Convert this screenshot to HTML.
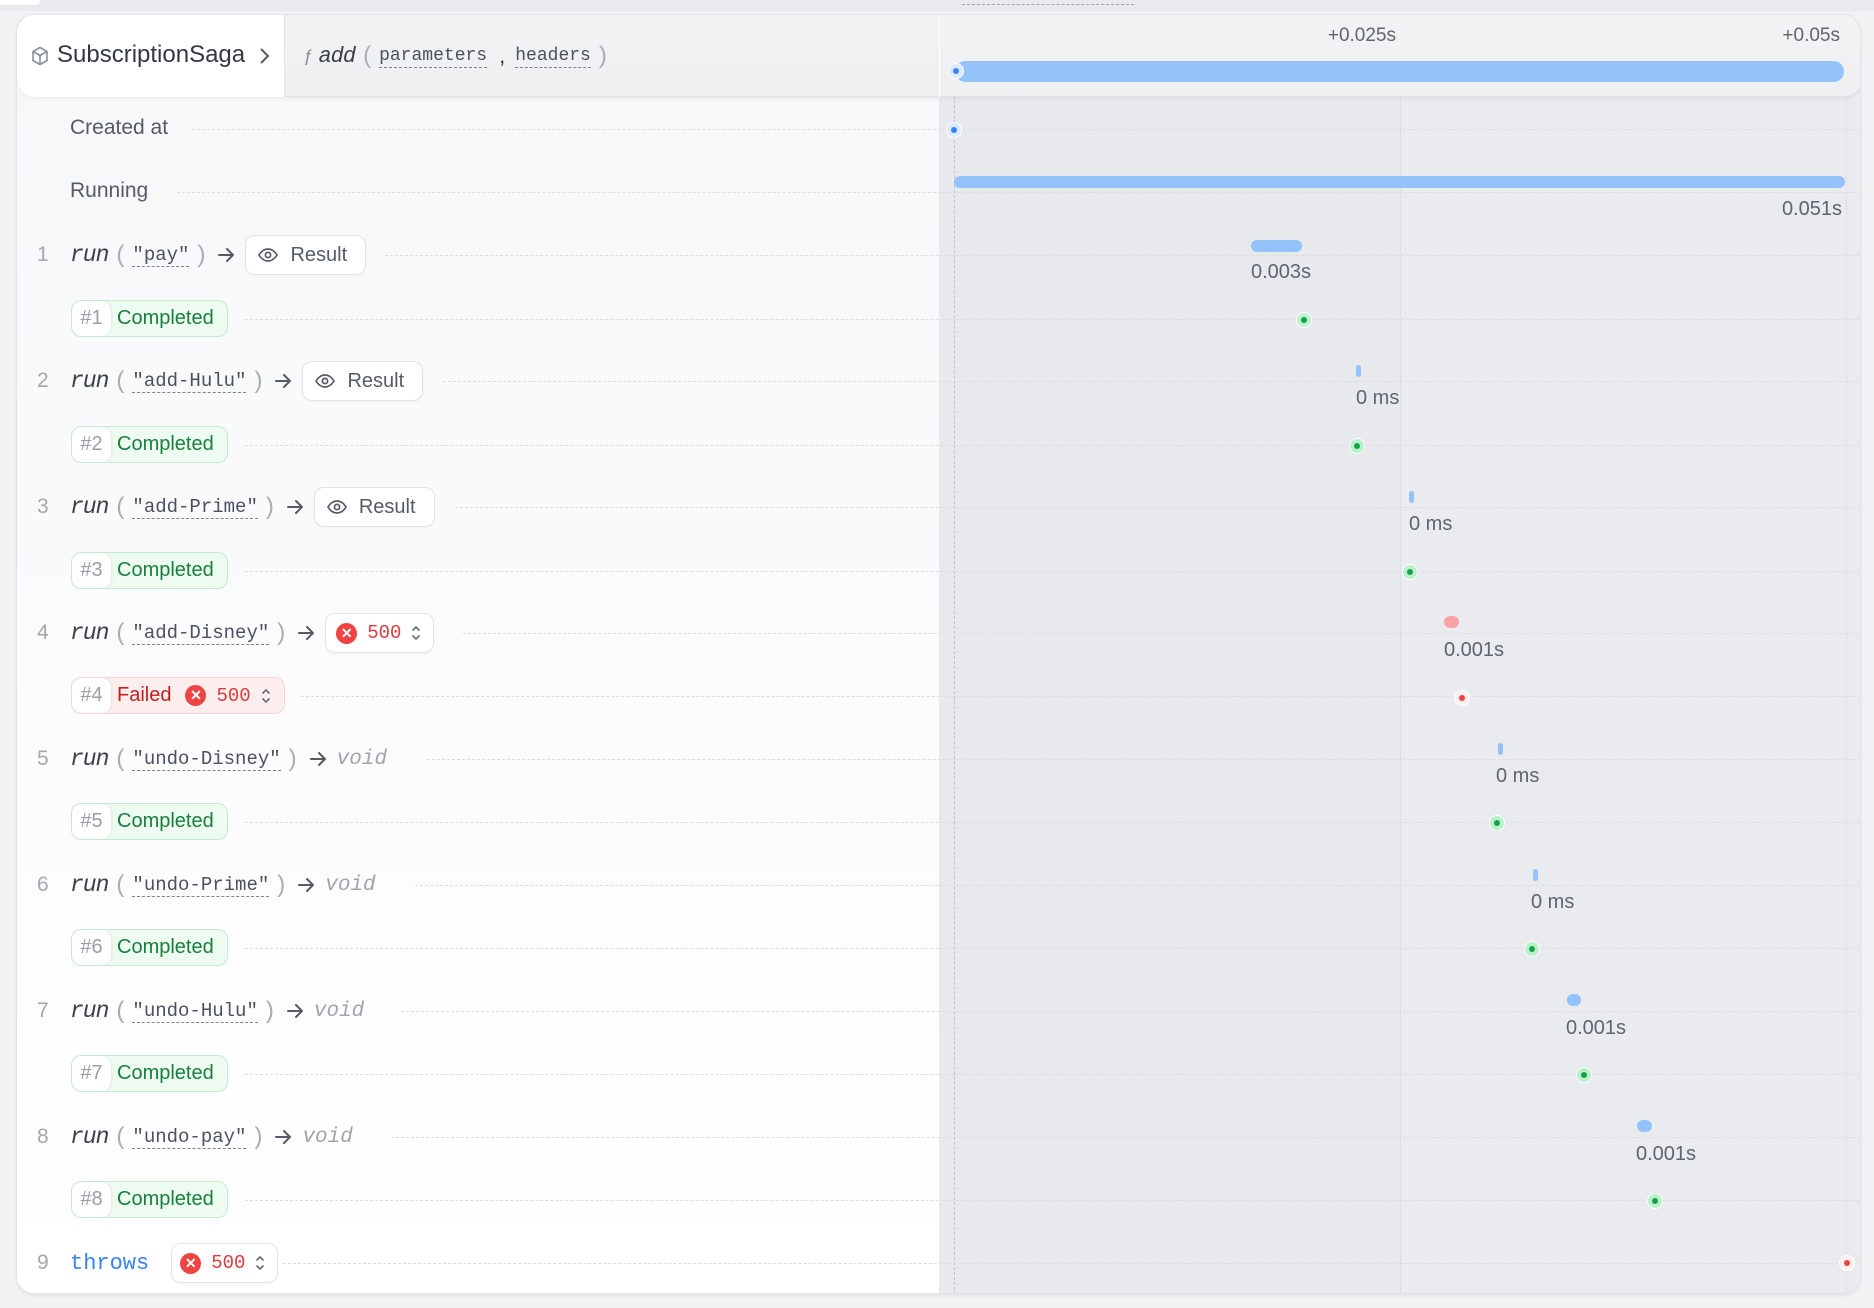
<!DOCTYPE html>
<html><head><meta charset="utf-8"><style>
*{box-sizing:border-box;margin:0;padding:0}
body{width:1874px;height:1308px;background:#f1f2f4;font-family:"Liberation Sans",sans-serif;position:relative;overflow:hidden}
.a{position:absolute}
.card{left:16px;top:14px;width:1845px;height:1280px;border-radius:18px;background:#fff;border:1px solid #e2e3e6;overflow:hidden;box-shadow:0 2px 3px rgba(0,0,0,.06)}
.left{left:0;top:0;width:922px;height:1280px;background:linear-gradient(#f6f7f8,#fcfcfd 60%,#fff)}
.tl{left:922px;top:0;width:923px;height:1280px;background:#e8e9ed}
.tl2{left:1383px;top:0;width:462px;height:1280px;background:#eaebee}
.hl{position:absolute;left:0;width:1845px;border-top:1px dashed #dcdde1}
.row{position:absolute;left:20px;display:flex;align-items:center;height:40px;gap:0;white-space:nowrap}
.num{width:33px;color:#a3a7b0;font-size:21px;font-family:"Liberation Sans",sans-serif}
.run{font-family:"Liberation Mono",monospace;font-style:italic;font-size:23px;color:#3a3f4b;letter-spacing:-1px}
.p{color:#a8acb5;font-size:24px;margin:0 8px;font-weight:300}
.s{font-family:"Liberation Mono",monospace;font-size:19px;color:#4b5160;border-bottom:1.5px dashed #7d828e;line-height:22px}
.arr{margin:0 10px 0 4px;width:18px;height:18px}
.void{font-family:"Liberation Mono",monospace;font-style:italic;font-size:21px;color:#a0a4ad}
.btn{display:flex;align-items:center;height:40px;border:1px solid #e3e4e8;border-radius:10px;background:#fff;padding:0 18px 0 12px;font-size:20px;color:#555a67;box-shadow:0 1px 2px rgba(0,0,0,.04)}
.st{position:absolute;left:54px;display:flex;height:37px;border-radius:10px;border:1px solid #c4ebd0;background:#eefbf1;overflow:hidden;font-size:20px;white-space:nowrap}
.st .h{width:39px;background:#fff;color:#9a9ea8;display:flex;align-items:center;justify-content:center;border-radius:10px;box-shadow:1px 0 2px rgba(0,0,0,.08)}
.st .t{color:#17803d;display:flex;align-items:center;padding:0 13px 0 6px}
.st.f{border-color:#fbd3d3;background:#fdeeee}
.st.f .t{color:#c01f1f}
.x{display:inline-flex;width:21px;height:21px;border-radius:50%;background:#ef4444;color:#fff;font-size:14px;align-items:center;justify-content:center;font-weight:bold;margin-right:10px}
.c5{font-family:"Liberation Mono",monospace;color:#e0393b;font-size:19px}
.ud{margin-left:10px;width:10px;height:16px}
.bar{position:absolute;background:#93c3fa;border-radius:7px}
.lab{position:absolute;font-size:20px;color:#5e6472}
.dot{position:absolute;width:16px;height:16px;border-radius:50%;background:#bbf0cc;border:1px solid #fff;margin:-8px 0 0 -8px}
.dot::after{content:"";position:absolute;left:4px;top:4px;width:6px;height:6px;border-radius:50%;background:#16a34a}
.dot.r{background:#fff0f0}.dot.r::after{background:#ef4444}
.dot.b{background:#dbe9fd}.dot.b::after{background:#3b82f6}
</style></head><body>
<svg width="0" height="0" style="position:absolute"><defs><symbol id="ar" viewBox="0 0 18 18"><path d="M2 9H16M10 3l6 6-6 6" fill="none" stroke="#555a66" stroke-width="2" stroke-linecap="round" stroke-linejoin="round"/></symbol></defs></svg>
<div class="a" style="left:0;top:0;width:1874px;height:11px;background:#e9eaed"></div>
<div class="a" style="left:0;top:0;width:40px;height:5px;background:#fff;border-radius:0 0 8px 0"></div>
<div class="a" style="left:962px;top:4px;width:172px;border-top:1px dashed #9ea2ab"></div>
<div class="a card">
 <div class="a left"></div>
 <div class="a tl"></div>
 <div class="a tl2"></div>
 <div class="a" style="left:1383px;top:0;height:1280px;border-left:1px dotted #cfd1d6"></div>
 <div class="a" style="left:937px;top:0;height:1280px;border-left:1px dashed #c0c3c9"></div>
 <div class="a" style="left:1829px;top:0;height:1280px;border-left:1px dotted #d5d7db"></div>
 <div class="hl" style="top:114px;left:175px"></div>
 <div class="hl" style="top:177px;left:160px"></div>
 <div class="hl" style="top:240px;left:368px"></div>
 <div class="hl" style="top:304px;left:228px"></div>
 <div class="hl" style="top:366px;left:426px"></div>
 <div class="hl" style="top:430px;left:228px"></div>
 <div class="hl" style="top:492px;left:438px"></div>
 <div class="hl" style="top:556px;left:228px"></div>
 <div class="hl" style="top:618px;left:446px"></div>
 <div class="hl" style="top:681px;left:284px"></div>
 <div class="hl" style="top:744px;left:410px"></div>
 <div class="hl" style="top:807px;left:228px"></div>
 <div class="hl" style="top:870px;left:398px"></div>
 <div class="hl" style="top:933px;left:228px"></div>
 <div class="hl" style="top:996px;left:384px"></div>
 <div class="hl" style="top:1059px;left:228px"></div>
 <div class="hl" style="top:1122px;left:374px"></div>
 <div class="hl" style="top:1185px;left:228px"></div>
 <div class="hl" style="top:1248px;left:266px"></div>
 <div class="a" style="left:0;top:0;width:1845px;height:82px;background:linear-gradient(#f3f3f4,#eeeff1);border-bottom:1px solid #e1e2e5;border-radius:18px;box-shadow:0 2px 3px rgba(0,0,0,.05)"></div>
 <div class="a" style="left:0;top:0;width:268px;height:82px;background:#fff;border-radius:18px 0 0 18px;border-right:1px solid #e2e3e6"></div>
 <div class="a" style="left:922px;top:0;width:1px;height:82px;background:#fff"></div>
 <svg class="a" style="left:14px;top:31px" width="18" height="20" viewBox="0 0 18 20" fill="none" stroke="#8a8f99" stroke-width="1.6" stroke-linejoin="round"><path d="M9 1.5L16 5.5V14.5L9 18.5L2 14.5V5.5Z M2 5.5L9 9.5L16 5.5 M9 9.5V18.5"/></svg>
 <div class="a" style="left:40px;top:26px;font-size:24px;color:#333845">SubscriptionSaga</div>
 <svg class="a" style="left:241px;top:32px" width="12" height="18" viewBox="0 0 12 18" fill="none" stroke="#555a66" stroke-width="2"><path d="M3 2l7 7-7 7"/></svg>
 <div class="a" style="left:286px;top:27px;display:flex;align-items:center;white-space:nowrap">
  <span style="font-size:17px;color:#888;font-style:italic;margin-right:6px">ƒ</span><span class="run" style="font-size:22px">add</span><span class="p">(</span><span class="s" style="font-size:18px">parameters</span><span style="margin:0 10px 0 12px;font-size:22px;color:#333">,</span><span class="s" style="font-size:18px">headers</span><span class="p">)</span>
 </div>
 <div class="lab" style="right:464px;top:10px;font-size:19px">+0.025s</div>
 <div class="lab" style="right:20px;top:10px;font-size:19px">+0.05s</div>
 <div class="bar" style="left:938px;top:46px;width:889px;height:21px;border-radius:11px"></div>
 <div class="dot b" style="left:939px;top:56px"></div>

 <div class="a" style="left:53px;top:101px;font-size:21px;color:#555a66">Created at</div>
 <div class="a" style="left:53px;top:164px;font-size:21px;color:#555a66">Running</div>

 <div class="row" style="top:220px"><span class="num">1</span><span class="run">run</span><span class="p">(</span><span class="s">"pay"</span><span class="p">)</span><svg class="arr"><use href="#ar"/></svg><span class="btn"><svg width="20" height="14" viewBox="0 0 20 14" fill="none" stroke="#555a67" stroke-width="1.7" style="margin-right:12px"><path d="M1 7C4 2 7 1 10 1S16 2 19 7C16 12 13 13 10 13S4 12 1 7Z"/><circle cx="10" cy="7" r="2.6"/></svg>Result</span></div>
 <div class="st" style="top:285px"><span class="h">#1</span><span class="t">Completed</span></div>

 <div class="row" style="top:346px"><span class="num">2</span><span class="run">run</span><span class="p">(</span><span class="s">"add-Hulu"</span><span class="p">)</span><svg class="arr"><use href="#ar"/></svg><span class="btn"><svg width="20" height="14" viewBox="0 0 20 14" fill="none" stroke="#555a67" stroke-width="1.7" style="margin-right:12px"><path d="M1 7C4 2 7 1 10 1S16 2 19 7C16 12 13 13 10 13S4 12 1 7Z"/><circle cx="10" cy="7" r="2.6"/></svg>Result</span></div>
 <div class="st" style="top:411px"><span class="h">#2</span><span class="t">Completed</span></div>

 <div class="row" style="top:472px"><span class="num">3</span><span class="run">run</span><span class="p">(</span><span class="s">"add-Prime"</span><span class="p">)</span><svg class="arr"><use href="#ar"/></svg><span class="btn"><svg width="20" height="14" viewBox="0 0 20 14" fill="none" stroke="#555a67" stroke-width="1.7" style="margin-right:12px"><path d="M1 7C4 2 7 1 10 1S16 2 19 7C16 12 13 13 10 13S4 12 1 7Z"/><circle cx="10" cy="7" r="2.6"/></svg>Result</span></div>
 <div class="st" style="top:537px"><span class="h">#3</span><span class="t">Completed</span></div>

 <div class="row" style="top:598px"><span class="num">4</span><span class="run">run</span><span class="p">(</span><span class="s">"add-Disney"</span><span class="p">)</span><svg class="arr"><use href="#ar"/></svg><span class="btn" style="padding:0 12px 0 10px"><span class="x">✕</span><span class="c5">500</span><svg class="ud" viewBox="0 0 10 16" fill="none" stroke="#666b77" stroke-width="1.6"><path d="M1.5 5.5L5 2l3.5 3.5M1.5 10.5L5 14l3.5-3.5"/></svg></span></div>
 <div class="st f" style="top:662px"><span class="h">#4</span><span class="t">Failed<span style="width:14px"></span><span class="x">✕</span><span class="c5">500</span><svg class="ud" viewBox="0 0 10 16" fill="none" stroke="#666b77" stroke-width="1.6"><path d="M1.5 5.5L5 2l3.5 3.5M1.5 10.5L5 14l3.5-3.5"/></svg></span></div>

 <div class="row" style="top:724px"><span class="num">5</span><span class="run">run</span><span class="p">(</span><span class="s">"undo-Disney"</span><span class="p">)</span><svg class="arr"><use href="#ar"/></svg><span class="void">void</span></div>
 <div class="st" style="top:788px"><span class="h">#5</span><span class="t">Completed</span></div>

 <div class="row" style="top:850px"><span class="num">6</span><span class="run">run</span><span class="p">(</span><span class="s">"undo-Prime"</span><span class="p">)</span><svg class="arr"><use href="#ar"/></svg><span class="void">void</span></div>
 <div class="st" style="top:914px"><span class="h">#6</span><span class="t">Completed</span></div>

 <div class="row" style="top:976px"><span class="num">7</span><span class="run">run</span><span class="p">(</span><span class="s">"undo-Hulu"</span><span class="p">)</span><svg class="arr"><use href="#ar"/></svg><span class="void">void</span></div>
 <div class="st" style="top:1040px"><span class="h">#7</span><span class="t">Completed</span></div>

 <div class="row" style="top:1102px"><span class="num">8</span><span class="run">run</span><span class="p">(</span><span class="s">"undo-pay"</span><span class="p">)</span><svg class="arr"><use href="#ar"/></svg><span class="void">void</span></div>
 <div class="st" style="top:1166px"><span class="h">#8</span><span class="t">Completed</span></div>

 <div class="row" style="top:1228px"><span class="num">9</span><span style="font-family:'Liberation Mono',monospace;font-size:22px;color:#3b82f6;margin-right:22px">throws</span><span class="btn" style="padding:0 12px 0 8px"><span class="x">✕</span><span class="c5">500</span><svg class="ud" viewBox="0 0 10 16" fill="none" stroke="#666b77" stroke-width="1.6"><path d="M1.5 5.5L5 2l3.5 3.5M1.5 10.5L5 14l3.5-3.5"/></svg></span></div>

 <div class="dot b" style="left:937px;top:115px"></div>
 <div class="bar" style="left:937px;top:161px;width:891px;height:12px"></div>
 <div class="lab" style="right:18px;top:183px">0.051s</div>

 <div class="bar" style="left:1234px;top:225px;width:51px;height:12px"></div>
 <div class="lab" style="left:1234px;top:246px">0.003s</div>
 <div class="dot" style="left:1287px;top:305px"></div>

 <div class="bar" style="left:1339px;top:350px;width:5px;height:12px"></div>
 <div class="lab" style="left:1339px;top:372px">0 ms</div>
 <div class="dot" style="left:1340px;top:431px"></div>

 <div class="bar" style="left:1392px;top:476px;width:5px;height:12px"></div>
 <div class="lab" style="left:1392px;top:498px">0 ms</div>
 <div class="dot" style="left:1393px;top:557px"></div>

 <div class="bar" style="left:1427px;top:601px;width:15px;height:12px;background:#f9a3a3"></div>
 <div class="lab" style="left:1427px;top:624px">0.001s</div>
 <div class="dot r" style="left:1445px;top:683px"></div>

 <div class="bar" style="left:1481px;top:728px;width:5px;height:12px"></div>
 <div class="lab" style="left:1479px;top:750px">0 ms</div>
 <div class="dot" style="left:1480px;top:808px"></div>

 <div class="bar" style="left:1516px;top:854px;width:5px;height:12px"></div>
 <div class="lab" style="left:1514px;top:876px">0 ms</div>
 <div class="dot" style="left:1515px;top:934px"></div>

 <div class="bar" style="left:1550px;top:979px;width:14px;height:12px"></div>
 <div class="lab" style="left:1549px;top:1002px">0.001s</div>
 <div class="dot" style="left:1567px;top:1060px"></div>

 <div class="bar" style="left:1620px;top:1105px;width:15px;height:12px"></div>
 <div class="lab" style="left:1619px;top:1128px">0.001s</div>
 <div class="dot" style="left:1638px;top:1186px"></div>

 <div class="dot r" style="left:1830px;top:1248px"></div>
</div>
</body></html>
